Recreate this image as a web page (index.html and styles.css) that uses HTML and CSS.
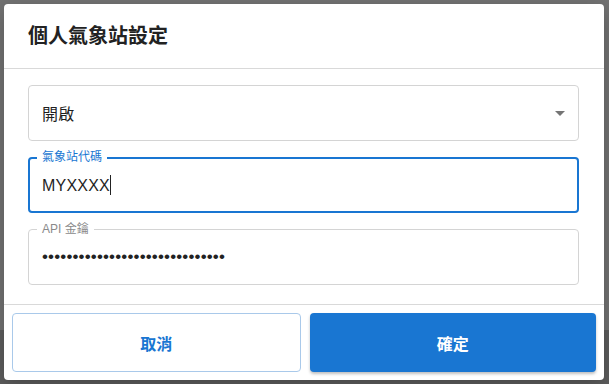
FILE: index.html
```html
<!DOCTYPE html>
<html lang="zh-Hant">
<head>
    <meta charset="UTF-8">
    <meta name="viewport" content="width=device-width, initial-scale=1.0">
    <title>個人氣象站設定</title>
    <link rel="stylesheet" href="styles.css">
</head>
<body>
    <div class="backdrop">
        <div class="dialog">
            <h2 class="dialog-title">個人氣象站設定</h2>
            <div class="dialog-content">
                <div class="field">
                    <div class="field-value">開啟</div>
                    <svg class="arrow" viewBox="0 0 24 24" width="24" height="24"><path d="M7 10l5 5 5-5z"/></svg>
                    <fieldset class="outline"><legend class="no-label"></legend></fieldset>
                </div>
                <div class="field focused">
                    <label class="field-label">氣象站代碼</label>
                    <div class="field-value">MYXXXX<span class="caret"></span></div>
                    <fieldset class="outline"><legend><span>氣象站代碼</span></legend></fieldset>
                </div>
                <div class="field">
                    <label class="field-label">API 金鑰</label>
                    <div class="field-value dots">••••••••••••••••••••••••••••••</div>
                    <fieldset class="outline"><legend><span>API 金鑰</span></legend></fieldset>
                </div>
            </div>
            <div class="dialog-actions">
                <button class="btn btn-outline">取消</button>
                <button class="btn btn-primary">確定</button>
            </div>
        </div>
    </div>
</body>
</html>
```

FILE: styles.css
```css
body{
    margin: 0;
    padding: 0;
    font-family: "Liberation Sans", "Noto Sans CJK TC", sans-serif;
    background: #6e6e6e;
}
.backdrop{
    height: 384px;
    padding: 4px;
    box-sizing: border-box;
    background: linear-gradient(#737373 0, #737373 330px, #5e5e5e 330px);
}
.dialog{
    width: 600px;
    height: 376px;
    background: #fff;
    border-radius: 4px;
    box-shadow: 0 6px 20px rgba(0,0,0,0.25);
    display: flex;
    flex-direction: column;
    overflow: hidden;
}
.dialog-title{
    margin: 0;
    padding: 16px 24px 16px 24px;
    font-size: 20px;
    line-height: 32px;
    font-weight: 700;
    color: #222;
}
.dialog-content{
    border-top: 1px solid #d9d9d9;
    border-bottom: 1px solid #d9d9d9;
    padding: 16px 25px 19px 24px;
    display: flex;
    flex-direction: column;
    gap: 16px;
}
.field{
    position: relative;
    height: 56px;
    display: flex;
    align-items: center;
    padding: 0 14px;
}
.field-value{
    font-size: 16px;
    color: #1f1f1f;
    letter-spacing: 0.2px;
}
.dots{
    font-size: 17px;
    letter-spacing: 0.15px;
    color: #222;
}
.caret{
    display: inline-block;
    width: 1px;
    height: 20px;
    background: #222;
    vertical-align: -4px;
}
.arrow{
    position: absolute;
    right: 7px;
    top: 16px;
    fill: #757575;
}
.outline{
    position: absolute;
    inset: -5px 0 0 0;
    margin: 0;
    padding: 0 8px;
    border: 1px solid #d4d4d4;
    border-radius: 4px;
    pointer-events: none;
}
.outline legend{
    padding: 0;
    font-size: 12px;
    height: 11px;
    visibility: hidden;
}
.outline legend span{
    padding: 0 5px;
}
.outline .no-label{
    width: 0;
}
.focused .outline{
    border: 2px solid #1976d2;
    padding: 0 7px;
}
.field-label{
    position: absolute;
    left: 14px;
    top: -8px;
    font-size: 12px;
    line-height: 16px;
    color: #8a8a8a;
}
.focused .field-label{
    color: #1976d2;
}
.dialog-actions{
    flex: 1;
    display: flex;
    gap: 9px;
    padding: 8px;
}
.btn{
    flex: 1;
    border-radius: 4px;
    font-family: "Liberation Sans", "Noto Sans CJK TC", sans-serif;
    font-size: 16px;
    font-weight: 700;
}
.btn-outline{
    background: #fff;
    color: #1976d2;
    border: 1px solid #a9c9ea;
}
.btn-primary{
    background: #1976d2;
    color: #fff;
    border: none;
    box-shadow: 0 2px 3px rgba(0,0,0,0.25);
}
```
